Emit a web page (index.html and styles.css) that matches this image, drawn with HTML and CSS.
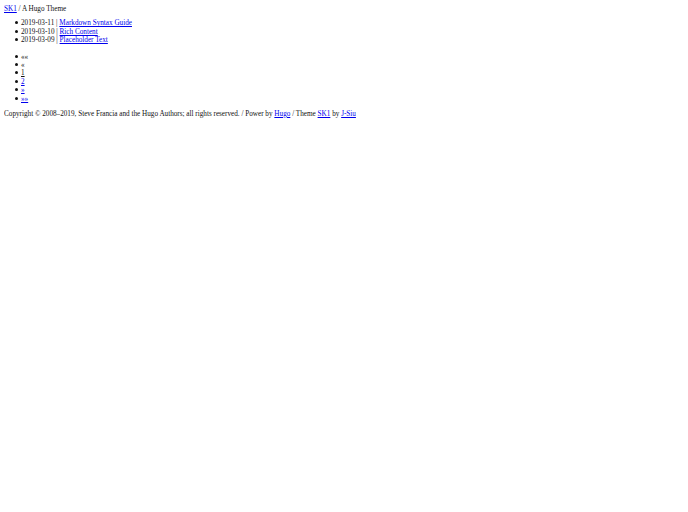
FILE: index.html
```html
<!DOCTYPE html>
<html>
<head>
<meta charset="utf-8">
<link rel="stylesheet" href="styles.css">
</head>
<body class="page">
<header class="site-header"><a href="#">SK1</a> / A Hugo Theme</header>
<main>
<ul class="posts">
<li>2019-03-11 | <a href="#">Markdown Syntax Guide</a></li>
<li>2019-03-10 | <a href="#">Rich Content</a></li>
<li>2019-03-09 | <a href="#">Placeholder Text</a></li>
</ul>
<ul class="pagination">
<li>««</li>
<li>«</li>
<li><span class="current">1</span></li>
<li><a href="#">2</a></li>
<li><a href="#">»</a></li>
<li><a href="#">»»</a></li>
</ul>
</main>
<footer class="site-footer">Copyright © 2008–2019, Steve Francia and the Hugo Authors; all rights reserved. / Power by <a href="#">Hugo</a> / Theme <a href="#">SK1</a> by <a href="#">J-Siu</a></footer>
</body>
</html>
```
FILE: styles.css
```css
html { background: #fff; }
.page {
  margin: 5px 4px 4px;
  font-family: "Liberation Serif", "Times New Roman", serif;
  font-size: 7.2px;
  line-height: 8.4px;
  color: #111;
}
a { color: #0000ee; }
.posts,
.pagination {
  padding-left: 17px;
  list-style: none;
}
.posts { margin: 6px 0 8px; }
.pagination { margin: 6.5px 0 6.5px; }
.posts li::before,
.pagination li::before {
  content: "";
  display: inline-block;
  width: 3px;
  height: 3px;
  border-radius: 50%;
  background: #111;
  margin-left: -6.5px;
  margin-right: 3.5px;
  vertical-align: 1px;
}
.current { text-decoration: underline; }
```
